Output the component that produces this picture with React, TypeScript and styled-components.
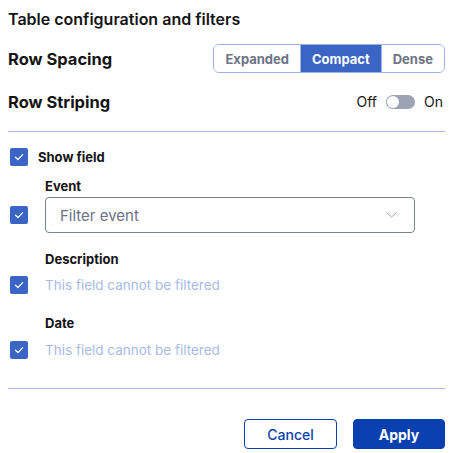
import React, { useState } from "react";
import styled, { createGlobalStyle } from "styled-components";

const GlobalStyle = createGlobalStyle`
  body {
    margin: 0;
    background: #ffffff;
    font-family: Inter, "Noto Sans", sans-serif;
    color: #141414;
  }
`;

const Panel = styled.div`
  width: 454px;
  box-sizing: border-box;
  padding: 7px 9px 4px 8px;
  display: flex;
  flex-direction: column;
`;

const Title = styled.div`
  font-size: 16px;
  font-weight: 600;
  line-height: 24px;
`;

const SettingRow = styled.div<{ $top: number }>`
  display: flex;
  align-items: center;
  justify-content: space-between;
  height: 29px;
  margin-top: ${(p) => p.$top}px;
`;

const SettingLabel = styled.div`
  font-size: 16.5px;
  font-weight: 700;
`;

const Segmented = styled.div`
  display: flex;
  border: 1px solid #9db3e4;
  border-radius: 6px;
  overflow: hidden;
  height: 27px;
`;

const Segment = styled.button<{ $active?: boolean }>`
  border: none;
  border-left: 1px solid #9db3e4;
  &:first-child {
    border-left: none;
  }
  background: ${(p) => (p.$active ? "#3a65c5" : "#ffffff")};
  color: ${(p) => (p.$active ? "#ffffff" : "#6d7485")};
  font-family: inherit;
  font-size: 13px;
  font-weight: 700;
  padding: 0 11px;
  cursor: pointer;
`;

const ToggleWrap = styled.div`
  display: flex;
  align-items: center;
  gap: 9px;
  font-size: 14px;
  padding-right: 2px;
`;

const Track = styled.span<{ $on: boolean }>`
  width: 29px;
  height: 14px;
  border-radius: 7px;
  background: ${(p) => (p.$on ? "#3a65c5" : "#9ca3b4")};
  display: flex;
  align-items: center;
  justify-content: ${(p) => (p.$on ? "flex-end" : "flex-start")};
  padding: 0 1px;
  box-sizing: border-box;
  cursor: pointer;
`;

const Knob = styled.span`
  width: 12px;
  height: 12px;
  border-radius: 50%;
  background: #ffffff;
`;

const Divider = styled.hr<{ $top: number }>`
  border: none;
  height: 1px;
  background: #a4b7e6;
  margin: ${(p) => p.$top}px 0 0 0;
`;

const CheckRow = styled.div<{ $top: number; $gap: number }>`
  display: flex;
  align-items: center;
  gap: ${(p) => p.$gap}px;
  margin-top: ${(p) => p.$top}px;
  padding-left: 2px;
`;

const Box = styled.span`
  width: 18px;
  height: 18px;
  border-radius: 2px;
  background: #3a65c5;
  display: flex;
  align-items: center;
  justify-content: center;
  flex-shrink: 0;
`;

const StrongText = styled.div`
  font-size: 13px;
  font-weight: 700;
`;

const FieldLabel = styled.div<{ $top: number }>`
  font-size: 13px;
  font-weight: 700;
  line-height: 16px;
  margin: ${(p) => p.$top}px 0 0 37px;
`;

const FieldRow = styled.div<{ $height: number; $top: number }>`
  display: flex;
  align-items: center;
  gap: 17px;
  min-height: ${(p) => p.$height}px;
  padding-left: 2px;
  margin-top: ${(p) => p.$top}px;
`;

const Select = styled.div`
  width: 370px;
  height: 36px;
  box-sizing: border-box;
  border: 1px solid #7b8291;
  border-radius: 4px;
  display: flex;
  align-items: center;
  justify-content: space-between;
  padding: 0 17px 0 14px;
  font-size: 15px;
  color: #6b7283;
`;

const Disabled = styled.div`
  font-size: 13.5px;
  color: #a8bbe8;
`;

const Actions = styled.div`
  display: flex;
  justify-content: flex-end;
  gap: 16px;
  margin-top: 30px;
`;

const Button = styled.button<{ $primary?: boolean }>`
  height: 30px;
  width: ${(p) => (p.$primary ? 92 : 93)}px;
  border-radius: 4px;
  border: 1px solid #0a3fae;
  background: ${(p) => (p.$primary ? "#0a40b0" : "#ffffff")};
  color: ${(p) => (p.$primary ? "#ffffff" : "#0a3fae")};
  font-family: inherit;
  font-size: 14px;
  font-weight: ${(p) => (p.$primary ? 700 : 500)};
  cursor: pointer;
`;

function Check() {
  return (
    <Box>
      <svg width="12" height="12" viewBox="0 0 12 12" fill="none">
        <path d="M2.5 6.3 L5 8.6 L9.6 3.6" stroke="#ffffff" strokeWidth="1.3" strokeLinecap="round" strokeLinejoin="round" />
      </svg>
    </Box>
  );
}

const spacings = ["Expanded", "Compact", "Dense"];

export default function App() {
  const [spacing, setSpacing] = useState("Compact");
  const [striped, setStriped] = useState(false);

  return (
    <Panel>
      <GlobalStyle />
      <Title>Table configuration and filters</Title>
      <SettingRow $top={13}>
        <SettingLabel>Row Spacing</SettingLabel>
        <Segmented>
          {spacings.map((s) => (
            <Segment key={s} $active={s === spacing} onClick={() => setSpacing(s)}>
              {s}
            </Segment>
          ))}
        </Segmented>
      </SettingRow>
      <SettingRow $top={14}>
        <SettingLabel>Row Striping</SettingLabel>
        <ToggleWrap>
          <span>Off</span>
          <Track $on={striped} onClick={() => setStriped(!striped)}>
            <Knob />
          </Track>
          <span>On</span>
        </ToggleWrap>
      </SettingRow>
      <Divider $top={15} />

      <CheckRow $top={16} $gap={10}>
        <Check />
        <StrongText>Show field</StrongText>
      </CheckRow>

      <FieldLabel $top={12}>Event</FieldLabel>
      <FieldRow $height={36} $top={3}>
        <Check />
        <Select>
          <span>Filter event</span>
          <svg width="11" height="6" viewBox="0 0 11 6" fill="none">
            <path d="M0.5 0.5 L5.5 5 L10.5 0.5" stroke="#9aa0ad" strokeWidth="1" />
          </svg>
        </Select>
      </FieldRow>

      <FieldLabel $top={18}>Description</FieldLabel>
      <FieldRow $height={26} $top={5}>
        <Check />
        <Disabled>This field cannot be filtered</Disabled>
      </FieldRow>

      <FieldLabel $top={17}>Date</FieldLabel>
      <FieldRow $height={28} $top={5}>
        <Check />
        <Disabled>This field cannot be filtered</Disabled>
      </FieldRow>

      <Divider $top={24} />
      <Actions>
        <Button>Cancel</Button>
        <Button $primary>Apply</Button>
      </Actions>
    </Panel>
  );
}
